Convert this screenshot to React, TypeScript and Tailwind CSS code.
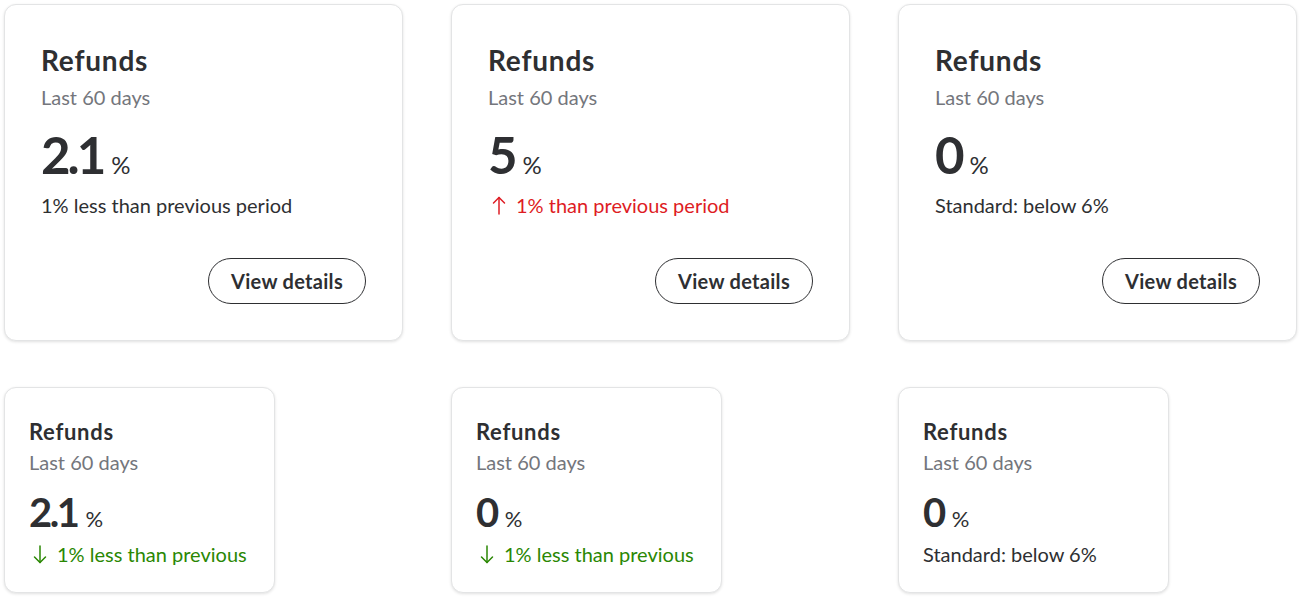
type Trend = 'up' | 'down' | 'none';

interface MetricCardProps {
  value: string;
  note: string;
  trend: Trend;
  size: 'lg' | 'sm';
}

function Arrow({ dir }: { dir: 'up' | 'down' }) {
  return (
    <svg className="ml-1" width="14" height="19" viewBox="0 0 14 19" fill="none" stroke="currentColor" strokeWidth="1.5" strokeLinecap="round" strokeLinejoin="round">
      {dir === 'up' ? (
        <>
          <path d="M7 1.5V18" />
          <path d="M1.5 7L7 1.5L12.5 7" />
        </>
      ) : (
        <>
          <path d="M7 1V17.5" />
          <path d="M1.5 12L7 17.5L12.5 12" />
        </>
      )}
    </svg>
  );
}

function Note({ note, trend }: { note: string; trend: Trend }) {
  const color =
    trend === 'up' ? 'text-[#de1c24]' : trend === 'down' ? 'text-[#2a8703]' : 'text-[#2e2f32]';
  return (
    <div className={`flex items-center gap-[10px] text-[20px] leading-7 ${color}`}>
      {trend === 'up' && <Arrow dir="up" />}
      {trend === 'down' && <Arrow dir="down" />}
      <span>{note}</span>
    </div>
  );
}

function MetricCard({ value, note, trend, size }: MetricCardProps) {
  if (size === 'sm') {
    return (
      <div className="w-[271px] rounded-xl border border-[#e3e4e5] bg-white px-6 pt-7 pb-6 shadow-[0_1px_3px_rgba(0,0,0,0.12)]">
        <div className="text-[22px] font-bold leading-8 tracking-[0.7px] text-[#2e2f32]">Refunds</div>
        <div className="text-[20px] leading-7 text-[#74767c]">Last 60 days</div>
        <div className="mt-[14px] flex items-baseline gap-2 text-[#2e2f32]">
          <span className="text-[40px] font-bold leading-[44px] tracking-[-2.5px]">{value}</span>
          <span className="text-[22px] leading-none">%</span>
        </div>
        <div className="mt-[6px]">
          <Note note={note} trend={trend} />
        </div>
      </div>
    );
  }
  return (
    <div className="flex h-[337px] flex-col rounded-xl border border-[#e3e4e5] bg-white p-9 shadow-[0_1px_3px_rgba(0,0,0,0.12)]">
      <div className="text-[28px] font-bold leading-[38px] tracking-[0.8px] text-[#2e2f32]">Refunds</div>
      <div className="mt-1 text-[20px] leading-7 text-[#74767c]">Last 60 days</div>
      <div className="mt-[16px] flex items-baseline gap-[8px] text-[#2e2f32]">
        <span className="text-[51px] font-bold leading-[56px] tracking-[-3px]">{value}</span>
        <span className="text-[24px] leading-none">%</span>
      </div>
      <div className="mt-[8px]">
        <Note note={note} trend={trend} />
      </div>
      <div className="mt-auto flex justify-end">
        <button className="h-[46px] w-[158px] rounded-full border border-[#2e2f32] text-[20px] font-bold tracking-[0.3px] text-[#2e2f32]">
          View details
        </button>
      </div>
    </div>
  );
}

export default function App() {
  return (
    <div className="flex min-h-screen flex-col gap-[46px] bg-white p-1 font-['Lato',sans-serif]">
      <div className="grid grid-cols-3 gap-12">
        <MetricCard size="lg" value="2.1" note="1% less than previous period" trend="none" />
        <MetricCard size="lg" value="5" note="1% than previous period" trend="up" />
        <MetricCard size="lg" value="0" note="Standard: below 6%" trend="none" />
      </div>
      <div className="grid grid-cols-3 gap-12">
        <MetricCard size="sm" value="2.1" note="1% less than previous" trend="down" />
        <MetricCard size="sm" value="0" note="1% less than previous" trend="down" />
        <MetricCard size="sm" value="0" note="Standard: below 6%" trend="none" />
      </div>
    </div>
  );
}
